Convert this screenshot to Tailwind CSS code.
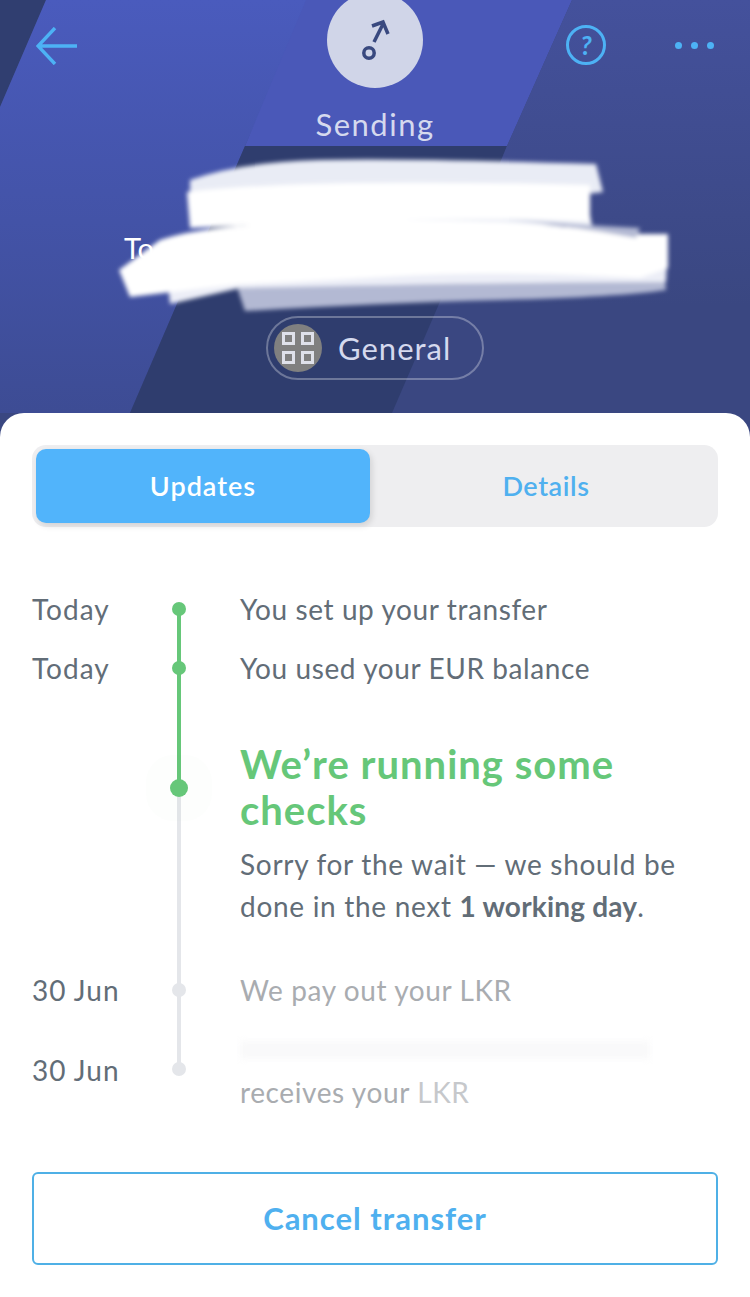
<!DOCTYPE html>
<html lang="en">

<head>
    <meta charset="UTF-8">
    <meta name="viewport" content="width=device-width, initial-scale=1.0">
    <script src="https://cdn.jsdelivr.net/npm/@tailwindcss/browser@4"></script>
    <title>Transfer</title>
</head>

<body class="bg-white font-['Lato','Liberation_Sans',sans-serif]">
    <div class="relative w-[750px] h-[1297px] overflow-hidden">

        <!-- header with the slanted background -->
        <header class="relative h-[437px] overflow-hidden bg-[#3a4781]">
            <svg class="absolute inset-0" width="750" height="437" viewBox="0 0 750 437">
                <defs>
                    <linearGradient id="band" x1="0" y1="0" x2="0" y2="1">
                        <stop offset="0" stop-color="#4a5bbd" />
                        <stop offset="1" stop-color="#3d4c94" />
                    </linearGradient>
                    <linearGradient id="side" x1="0" y1="0" x2="0" y2="1">
                        <stop offset="0" stop-color="#44519c" />
                        <stop offset="0.7" stop-color="#3a4781" />
                    </linearGradient>
                    <filter id="soft"><feGaussianBlur stdDeviation="2.2" /></filter>
                </defs>
                <polygon points="0,0 46,0 0,107" fill="#303e70" />
                <polygon points="46,0 310,0 245,146 130,413 0,413 0,107" fill="url(#band)" />
                <polygon points="306,0 572,0 507,146 245,146" fill="#4a58b8" />
                <polygon points="245,146 507,146 392,413 130,413" fill="#2f3d6e" />
                <polygon points="507,146 572,0 750,0 750,437 392,437" fill="url(#side)" />
                <!-- scribbled out recipient -->
                <g filter="url(#soft)">
                    <path d="M190 180Q240 162 320 160T596 164L603 192 570 196 590 215 592 226 190 222Z" fill="#e9ecf5" />
                    <path d="M240 270H664L666 290Q620 297 500 300T245 311L238 290Z" fill="#b3b9d3" />
                    <path d="M166 262 640 250 667 262 666 282Q500 282 240 288L170 304Z" fill="#eceef7" />
                    <path d="M119 270 160 240Q200 226 300 222T500 222Q590 228 640 234L668 234 668 268 640 278Q500 270 400 276T240 284L130 297Z" fill="#ffffff" />
                    <path d="M187 192Q300 178 590 185L590 222Q500 216 330 222L190 228Z" fill="#ffffff" />
                    <path d="M498 218Q560 224 640 228L636 238Q570 226 498 218Z" fill="#b3b9d3" />
                </g>
            </svg>

            <div class="relative grid grid-cols-[1fr_96px_1fr] px-9 -mt-2">
                <div class="pt-[35px]">
                    <svg width="42" height="38" viewBox="0 0 42 38" fill="none" stroke="#4db2f5" stroke-width="3.4">
                        <path d="M41 19H2M19 1 2 19l17 18" />
                    </svg>
                </div>
                <div class="w-24 h-24 rounded-full bg-[#d0d5e8] flex items-center justify-center">
                    <svg width="40" height="50" viewBox="0 0 40 50" fill="none" stroke="#39497f" stroke-width="3.5">
                        <circle cx="14" cy="38" r="5.2" />
                        <path d="M19 27 28 9M17 11l11-4 5 12" />
                    </svg>
                </div>
                <div class="flex justify-end items-start gap-[69px] pt-[33px]">
                    <div class="w-[40px] h-[40px] rounded-full border-[3px] border-[#4db2f5] text-[#4db2f5] text-[26px] leading-[34px] font-bold italic text-center">?</div>
                    <div class="flex gap-[9px] pt-[17px]">
                        <span class="w-[7px] h-[7px] rounded-full bg-[#4db2f5]"></span>
                        <span class="w-[7px] h-[7px] rounded-full bg-[#4db2f5]"></span>
                        <span class="w-[7px] h-[7px] rounded-full bg-[#4db2f5]"></span>
                    </div>
                </div>
            </div>

            <p class="relative text-center text-[31px] leading-[40px] tracking-[1.5px] text-[#d5d9ee] mt-[16px]">Sending</p>

            <p class="absolute left-[124px] top-[232px] text-white text-[29px] leading-[32px]">To</p>

            <div class="absolute left-[266px] top-[316px] w-[218px] h-[64px] rounded-full border-2 border-white/30 flex items-center pl-[6px] gap-[16px]">
                <div class="w-12 h-12 rounded-full bg-[#808080] grid grid-cols-2 gap-[6px] p-[8px]">
                    <span class="border-[3px] border-[#dfe1ea]"></span>
                    <span class="border-[3px] border-[#dfe1ea]"></span>
                    <span class="border-[3px] border-[#dfe1ea]"></span>
                    <span class="border-[3px] border-[#dfe1ea]"></span>
                </div>
                <span class="text-[31px] tracking-[1px] text-[#d5d9ee]">General</span>
            </div>
        </header>

        <!-- white sheet -->
        <main class="relative -mt-6 h-[884px] bg-white rounded-t-[24px] px-8 pt-8">
            <div class="flex h-[82px] rounded-[14px] bg-[#eeeef0] p-1">
                <div class="w-[334px] rounded-[10px] bg-[#51b4fb] shadow-[2px_3px_6px_rgba(0,0,0,0.12)] flex items-center justify-center text-white text-[27px] tracking-[1px] font-semibold">Updates</div>
                <div class="flex-1 flex items-center justify-center pl-[8px] text-[#4fb0ef] text-[27px] tracking-[0.6px] font-semibold">Details</div>
            </div>

            <!-- timeline -->
            <div class="relative mt-[61px] text-[28px] leading-[42px] tracking-[0.6px] text-[#626d77]">
                <div class="absolute left-[145px] top-[21px] w-1 h-[180px] bg-[#66c779]"></div>
                <div class="absolute left-[145px] top-[201px] w-1 h-[280px] bg-[#e4e6ea]"></div>

                <div class="flex items-center h-[42px]">
                    <span class="w-[147px] tracking-[1px]">Today</span>
                    <span class="relative h-[14px] bg-[#66c779] rounded-full w-[14px] -ml-[7px]"></span>
                    <span class="ml-[54px]">You set up your transfer</span>
                </div>
                <div class="flex items-center h-[42px] mt-[17px]">
                    <span class="w-[147px] tracking-[1px]">Today</span>
                    <span class="relative h-[14px] bg-[#66c779] rounded-full w-[14px] -ml-[7px]"></span>
                    <span class="ml-[54px]">You used your EUR balance</span>
                </div>

                <div class="flex mt-[52px]">
                    <span class="w-[147px]"></span>
                    <span class="relative h-[18px] w-[18px] -ml-[9px] mt-[38px] bg-[#66c779] rounded-full shadow-[0_0_0_24px_rgba(102,199,121,0.015)]"></span>
                    <div class="ml-[52px]">
                        <h2 class="text-[40px] leading-[46px] tracking-[1px] font-bold text-[#66c779]">We’re running some<br>checks</h2>
                        <p class="mt-[10px] tracking-[0.7px]">Sorry for the wait — we should be<br>done in the next <b class="tracking-[0.2px]">1 working day</b>.</p>
                    </div>
                </div>

                <div class="flex items-center h-[42px] mt-[42px]">
                    <span class="w-[147px] tracking-[1px]">30 Jun</span>
                    <span class="relative h-[14px] bg-[#e4e6ea] rounded-full w-[14px] -ml-[7px]"></span>
                    <span class="ml-[54px] text-[#a9acb0]">We pay out your LKR</span>
                </div>
                <div class="flex mt-[18px]">
                    <span class="w-[147px] pt-[20px] tracking-[1px]">30 Jun</span>
                    <span class="relative h-[14px] bg-[#e4e6ea] rounded-full w-[14px] -ml-[7px] mt-[33px]"></span>
                    <div class="ml-[54px]">
                        <div class="h-[42px] flex items-center"><span class="block w-[410px] h-[18px] bg-[#f9f9fa] blur-[3px]"></span></div>
                        <p class="text-[#a9acb0]">receives your <span class="text-[#c6c8cb]">LKR</span></p>
                    </div>
                </div>
            </div>

            <button class="absolute left-8 right-8 top-[759px] h-[93px] rounded-[6px] border-2 border-[#4fb0e6] bg-white text-[#4fb0ef] text-[31px] tracking-[1px] font-bold">Cancel transfer</button>
        </main>
    </div>
</body>

</html>
